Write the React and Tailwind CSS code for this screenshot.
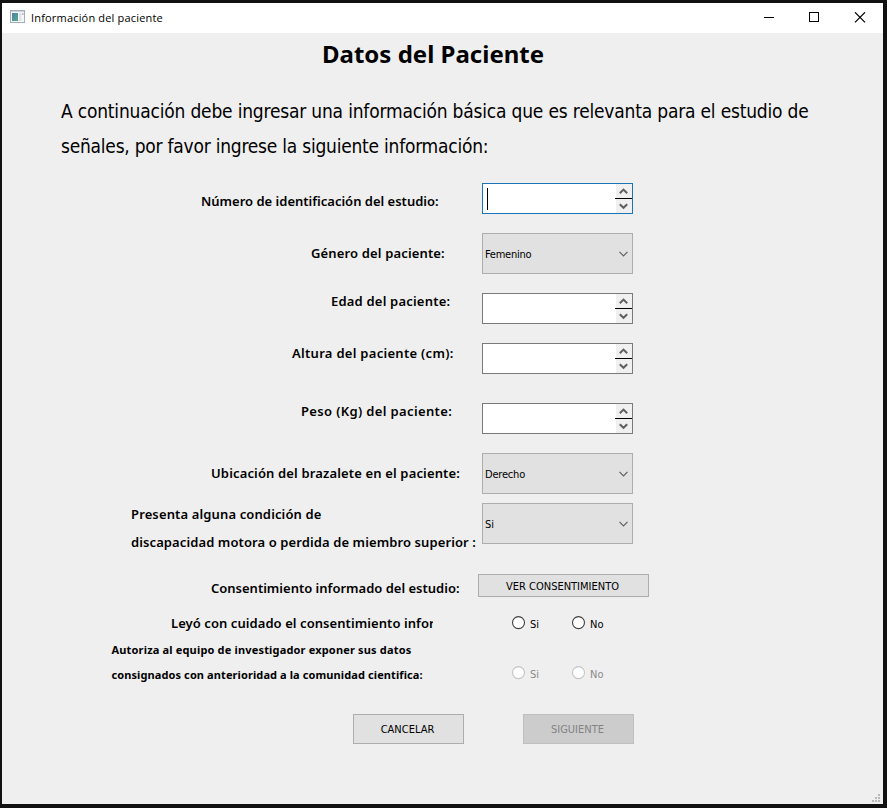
import React from 'react';

const TAHOMA = "font-['DejaVu_Sans_Condensed','DejaVu_Sans',sans-serif]";
const BOLD = "font-['Noto_Sans','Open_Sans',sans-serif] font-semibold";

function SpinBox({ focused = false }) {
  return (
    <div className={`flex h-[31px] w-[151px] border bg-white ${focused ? 'border-[#1c74b8]' : 'border-[#7a7a7a]'}`}>
      <div className="flex flex-1 items-center pl-1">
        {focused && <div className="h-[22px] w-px bg-black" />}
      </div>
      <svg width="17" height="29" viewBox="0 0 17 29" fill="none" className="shrink-0">
        <rect x="1" width="16" height="29" fill="#f0f0f0" />
        <path d="M0 14.5H17" stroke="#000" shapeRendering="crispEdges" />
        <path d="M4.8 9.2L8.5 5.6L12.2 9.2" stroke="#606060" strokeWidth="2" />
        <path d="M4.8 20.2L8.5 23.8L12.2 20.2" stroke="#606060" strokeWidth="2" />
      </svg>
    </div>
  );
}

function Combo({ value, spacing }) {
  return (
    <div className="flex h-[41px] w-[151px] items-center justify-between border border-[#adadad] bg-[#e1e1e1] pl-[2px] pr-1">
      <span className={`${TAHOMA} pt-0.5 text-[11px] leading-4 ${spacing}`}>{value}</span>
      <svg width="9" height="6" viewBox="0 0 9 6" fill="none">
        <path d="M0.5 0.8L4.5 4.8L8.5 0.8" stroke="#606060" strokeWidth="1.2" />
      </svg>
    </div>
  );
}

function Radio({ label, disabled = false }) {
  return (
    <div className="flex w-[60px] items-start gap-1">
      <svg width="15" height="14" viewBox="0 0 15 14" className="shrink-0">
        <circle cx="7.5" cy="6.6" r="6" fill="#fff" stroke={disabled ? '#c4c4c4' : '#404040'} strokeWidth="1.1" />
      </svg>
      <span className={`${TAHOMA} pt-px text-[11px] leading-4 ${disabled ? 'text-[#8a8a8a]' : 'text-black'}`}>{label}</span>
    </div>
  );
}

function Row({ height, label, children }) {
  return (
    <div className={`flex items-start ${height}`}>
      <div className={`w-[480px] shrink-0 whitespace-nowrap text-[13px] leading-4 ${BOLD}`}>{label}</div>
      {children}
    </div>
  );
}

export default function App() {
  return (
    <div className="h-[808px] w-[887px] bg-[#111111] pl-[2px] pt-[3px] text-black">
      <div className="flex h-[801px] w-[881px] flex-col bg-[#efefef]">
        <header className="flex h-[30px] shrink-0 items-center bg-white pl-2">
          <svg width="15" height="13" viewBox="0 0 15 13" className="mb-[3px]">
            <defs>
              <linearGradient id="pane" x1="0" y1="0" x2="1" y2="1">
                <stop offset="0" stopColor="#4b83a8" />
                <stop offset="1" stopColor="#58a888" />
              </linearGradient>
            </defs>
            <rect x="0.5" y="0.5" width="14" height="12" fill="#f4f6f8" stroke="#a4adb1" />
            <rect x="1" y="1" width="13" height="1" fill="#c9d2d8" />
            <rect x="2" y="3" width="6" height="8" fill="url(#pane)" />
            <rect x="9" y="3" width="2.5" height="8" fill="#dde4e6" />
            <rect x="12" y="3" width="1.5" height="2" fill="#b4bec4" />
          </svg>
          <span className="ml-1.5 font-['Open_Sans','Noto_Sans',sans-serif] text-[11px] leading-4 tracking-[0.18px]">
            Información del paciente
          </span>
          <svg width="102" height="11" viewBox="0 0 102 11" fill="none" stroke="#000" className="mb-[2px] ml-auto mr-[17px]" shapeRendering="crispEdges">
            <path d="M0 5.5H10" />
            <rect x="45.5" y="0.5" width="9" height="9" />
            <path d="M91 0.3L101 10.3M101 0.3L91 10.3" shapeRendering="auto" strokeWidth="1.2" />
          </svg>
        </header>

        <h1 className="h-[61px] pl-[320px] pt-[3px] font-['Noto_Sans','Open_Sans',sans-serif] text-2xl font-bold leading-9">
          Datos del Paciente
        </h1>

        <div className={`h-[89px] whitespace-nowrap pl-[59px] text-[19px] leading-[35px] ${TAHOMA}`}>
          <div className="tracking-[-0.19px]">
            A continuación debe ingresar una información básica que es relevanta para el estudio de
          </div>
          <div className="tracking-[-0.23px]">señales, por favor ingrese la siguiente información:</div>
        </div>

        <Row height="h-[50px]" label={<div className="pl-[199px] pt-[10px]">Número de identificación del estudio:</div>}>
          <SpinBox focused />
        </Row>
        <Row height="h-[60px]" label={<div className="pl-[309px] pt-3 tracking-[0.15px]">Género del paciente:</div>}>
          <Combo value="Femenino" spacing="tracking-[-0.25px]" />
        </Row>
        <Row height="h-[50px]" label={<div className="pl-[329px] tracking-[0.2px]">Edad del paciente:</div>}>
          <SpinBox />
        </Row>
        <Row height="h-[60px]" label={<div className="pl-[290px] pt-[2px] tracking-[0.29px]">Altura del paciente (cm):</div>}>
          <SpinBox />
        </Row>
        <Row height="h-[50px]" label={<div className="pl-[299px] tracking-[0.36px]">Peso (Kg) del paciente:</div>}>
          <SpinBox />
        </Row>
        <Row height="h-[50px]" label={<div className="pl-[209px] pt-3 tracking-[0.15px]">Ubicación del brazalete en el paciente:</div>}>
          <Combo value="Derecho" spacing="tracking-[-0.2px]" />
        </Row>
        <Row
          height="h-[71px]"
          label={
            <div className="pl-[129px] leading-7">
              <div className="-mt-[3px] tracking-[0.13px]">Presenta alguna condición de</div>
              <div className="tracking-[0.1px]">discapacidad motora o perdida de miembro superior :</div>
            </div>
          }
        >
          <Combo value="Si" spacing="tracking-normal" />
        </Row>
        <Row height="h-[42px]" label={<div className="pl-[209px] pt-[6px]">Consentimiento informado del estudio:</div>}>
          <button className={`-ml-1 h-[23px] w-[171px] border border-[#adadad] bg-[#e1e1e1] pr-0.5 pt-0.5 text-[11px] leading-4 ${TAHOMA}`}>
            VER CONSENTIMIENTO
          </button>
        </Row>
        <Row
          height="h-[25px]"
          label={<div className="ml-[169px] -mt-px w-[262px] overflow-hidden tracking-[0.07px]">Leyó con cuidado el consentimiento infor</div>}
        >
          <div className="flex pl-[29px]">
            <Radio label="Si" />
            <Radio label="No" />
          </div>
        </Row>
        <Row
          height="h-[73px]"
          label={
            <div className="-mt-1 pl-[109.5px] text-[11px] font-bold leading-[25px]">
              <div className="tracking-[0.17px]">Autoriza al equipo de investigador exponer sus datos</div>
              <div className="tracking-[0.1px]">consignados con anterioridad a la comunidad cientifica:</div>
            </div>
          }
        >
          <div className="flex pl-[29px] pt-[25px]">
            <Radio label="Si" disabled />
            <Radio label="No" disabled />
          </div>
        </Row>

        <div className={`flex gap-[59px] pl-[351px] text-[11px] leading-4 ${TAHOMA}`}>
          <button className="h-[30px] w-[111px] border border-[#adadad] bg-[#e1e1e1] pr-0.5 pt-0.5">CANCELAR</button>
          <button className="h-[30px] w-[111px] border border-[#bfbfbf] bg-[#cccccc] pr-0.5 pt-0.5 text-[#838383]">SIGUIENTE</button>
        </div>

        <svg width="8" height="8" viewBox="0 0 8 8" fill="#b8b8b8" className="mb-[2px] ml-auto mr-[3px] mt-auto">
          <path d="M6 0h2v2h-2zM3 3h2v2h-2zM6 3h2v2h-2zM0 6h2v2h-2zM3 6h2v2h-2zM6 6h2v2h-2z" />
        </svg>
      </div>
    </div>
  );
}
